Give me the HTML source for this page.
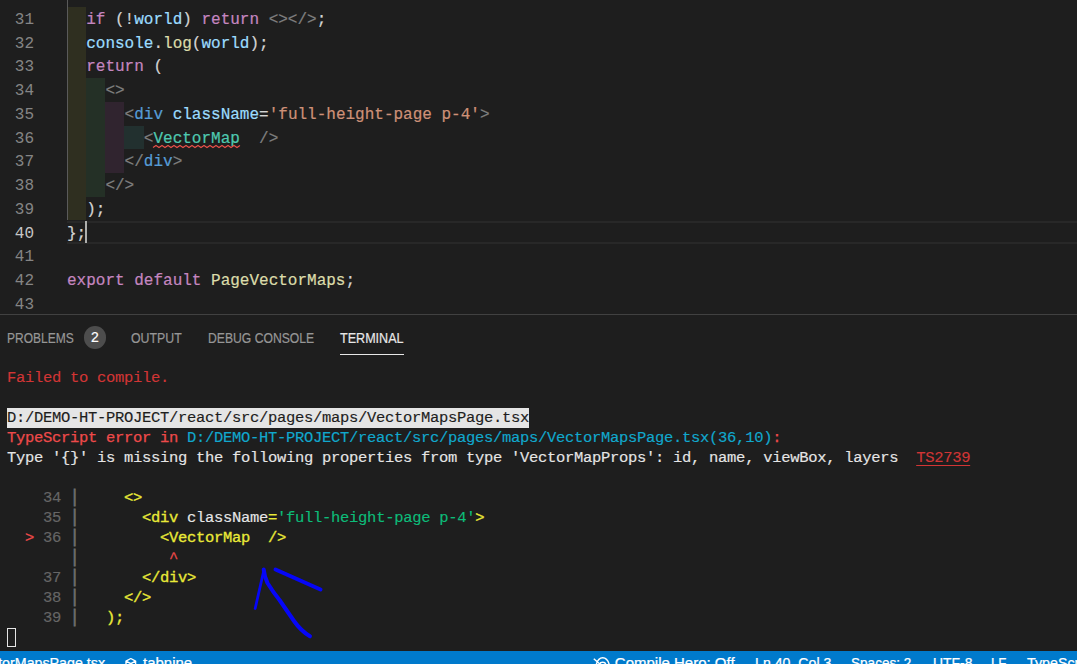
<!DOCTYPE html>
<html><head><meta charset="utf-8">
<style>
html,body{margin:0;padding:0;}
body{width:1077px;height:664px;overflow:hidden;background:#1e1e1e;position:relative;font-family:"Liberation Mono",monospace;}
#ed{position:absolute;left:0;top:6.3px;width:1077px;}
.ln{position:absolute;left:0;width:1077px;height:23.75px;line-height:23.75px;font-size:16px;color:#d4d4d4;white-space:pre;}
.num{position:absolute;left:-1px;top:2px;width:35px;text-align:right;color:#858585;font-size:16px;font-family:"Liberation Mono",monospace;}
.code{position:absolute;left:67px;top:2px;-webkit-text-stroke:0.2px;}
.k{color:#c586c0}.v{color:#9cdcfe}.f{color:#dcdcaa}.s{color:#ce9178}.t{color:#569cd6}.c{color:#4ec9b0}.p{color:#808080}
.blk{position:absolute;}
#panelborder{position:absolute;left:0;top:314px;width:1077px;height:1px;background:#414141;}
.tab{position:absolute;top:329.5px;font-family:"Liberation Sans",sans-serif;font-size:14px;line-height:16px;color:#969696;white-space:pre;transform-origin:0 0;-webkit-text-stroke:0.2px;}
#term{position:absolute;left:7px;top:368px;font-size:15.5px;letter-spacing:-0.3px;line-height:20px;white-space:pre;color:#e5e5e5;-webkit-text-stroke:0.15px;}
.tl{height:20px;}
.r{color:#d13535;-webkit-text-stroke:0.15px #d13535}.rb{color:#ee4a4a;-webkit-text-stroke:0.25px #ee4a4a}.cy{color:#11a8cd}.y{color:#eaea38;-webkit-text-stroke:0.3px #eaea38}.pp{display:inline-block;position:relative;top:-1px;transform:scaleY(1.2);color:#6e6e6e;-webkit-text-stroke:0.7px #6e6e6e}.g{color:#0dbc79}.gr{color:#666}
#status{position:absolute;left:0;top:650.5px;width:1077px;height:14px;background:#007acc;overflow:hidden;color:#fff;font-family:"Liberation Sans",sans-serif;font-size:15px;}
#status span{position:absolute;top:3.8px;-webkit-text-stroke:0.25px #fff;line-height:17px;white-space:pre;transform-origin:0 0;}
</style></head><body>
<div id="ed">
<!-- indent blocks -->
<div class="blk" style="left:67px;top:-7px;width:1px;height:221px;background:#5a5a5a"></div>
<div class="blk" style="left:68px;top:0.5px;width:17.6px;height:213.6px;background:#2f2f20"></div>
<div class="blk" style="left:85.6px;top:71.9px;width:19.7px;height:118.6px;background:#243026"></div>
<div class="blk" style="left:105.3px;top:95.7px;width:18.7px;height:70.7px;background:#30242f"></div>
<div class="blk" style="left:124px;top:119.4px;width:19.9px;height:23.3px;background:#22302f"></div>
<!-- current line -->
<div class="blk" style="left:67px;top:215px;width:1010px;height:23px;border-top:2px solid #282828;border-bottom:2px solid #282828;box-sizing:border-box"></div>
<div class="blk" style="left:85px;top:214.5px;width:2px;height:22.5px;background:#aeafad"></div>
</div>
<div id="lines">
<div class="ln" style="top:7.30px"><span class="num">31</span><span class="code">  <span class="k">if</span> (!<span class="v">world</span>) <span class="k">return</span> <span class="p">&lt;&gt;&lt;/&gt;</span>;</span></div>
<div class="ln" style="top:31.05px"><span class="num">32</span><span class="code">  <span class="v">console</span>.<span class="f">log</span>(<span class="v">world</span>);</span></div>
<div class="ln" style="top:53.80px"><span class="num">33</span><span class="code">  <span class="k">return</span> (</span></div>
<div class="ln" style="top:77.55px"><span class="num">34</span><span class="code">    <span class="p">&lt;&gt;</span></span></div>
<div class="ln" style="top:102.30px"><span class="num">35</span><span class="code">      <span class="p">&lt;</span><span class="t">div</span> <span class="v">className</span>=<span class="s">'full-height-page p-4'</span><span class="p">&gt;</span></span></div>
<div class="ln" style="top:126.05px"><span class="num">36</span><span class="code">        <span class="p">&lt;</span><span class="c sq">VectorMap</span>  <span class="p">/&gt;</span></span></div>
<div class="ln" style="top:148.80px"><span class="num">37</span><span class="code">      <span class="p">&lt;/</span><span class="t">div</span><span class="p">&gt;</span></span></div>
<div class="ln" style="top:172.55px"><span class="num">38</span><span class="code">    <span class="p">&lt;/&gt;</span></span></div>
<div class="ln" style="top:197.30px"><span class="num">39</span><span class="code">  );</span></div>
<div class="ln" style="top:221.05px"><span class="num" style="color:#c6c6c6">40</span><span class="code">};</span></div>
<div class="ln" style="top:243.80px"><span class="num">41</span><span class="code"></span></div>
<div class="ln" style="top:267.55px"><span class="num">42</span><span class="code"><span class="k">export</span> <span class="k">default</span> <span class="f">PageVectorMaps</span>;</span></div>
<div class="ln" style="top:292.30px"><span class="num">43</span><span class="code"></span></div>
</div>
<svg style="position:absolute;left:0;top:0" width="1077" height="320" viewBox="0 0 1077 320"><path d="M153 147.5 L156 145.5 L159 147.5 L162 145.5 L165 147.5 L168 145.5 L171 147.5 L174 145.5 L177 147.5 L180 145.5 L183 147.5 L186 145.5 L189 147.5 L192 145.5 L195 147.5 L198 145.5 L201 147.5 L204 145.5 L207 147.5 L210 145.5 L213 147.5 L216 145.5 L219 147.5 L222 145.5 L225 147.5 L228 145.5 L231 147.5 L234 145.5 L237 147.5 L240 145.5" fill="none" stroke="#e8514a" stroke-width="1.1"/></svg>
<div id="panelborder"></div>
<div class="tab" style="left:6.6px;transform:scaleX(0.857)">PROBLEMS</div>
<div class="tab" style="left:131.2px;transform:scaleX(0.881)">OUTPUT</div>
<div class="tab" style="left:207.6px;transform:scaleX(0.869)">DEBUG CONSOLE</div>
<div class="tab" style="left:340px;color:#e7e7e7;transform:scaleX(0.898)">TERMINAL</div>
<div style="position:absolute;left:340px;top:353.5px;width:64px;height:1.25px;background:#e7e7e7"></div>
<div style="position:absolute;left:83.8px;top:326.4px;width:22px;height:22.4px;border-radius:11.2px;background:#4d4d4d;color:#fff;font-family:'Liberation Sans',sans-serif;font-size:14px;line-height:22px;-webkit-text-stroke:0.2px;text-align:center">2</div>
<div id="term"><div class="tl r">Failed to compile.</div><div class="tl"> </div><div class="tl"><span style="background:#e5e5e5;color:#1e1e1e;display:inline-block;height:20px;vertical-align:top">D:/DEMO-HT-PROJECT/react/src/pages/maps/VectorMapsPage.tsx</span></div><div class="tl"><span class="rb">TypeScript error in </span><span class="cy">D:/DEMO-HT-PROJECT/react/src/pages/maps/VectorMapsPage.tsx(36,10)</span><span class="rb">:</span></div><div class="tl">Type '{}' is missing the following properties from type 'VectorMapProps': id, name, viewBox, layers  <span class="r" style="text-decoration:underline;text-underline-offset:3px;text-decoration-thickness:1.25px">TS2739</span></div><div class="tl"> </div><div class="tl"><span class="gr">    34 <span class="pp">|</span> </span>    <span class="y">&lt;&gt;</span></div><div class="tl"><span class="gr">    35 <span class="pp">|</span> </span>      <span class="y">&lt;div</span> className<span class="y">=</span><span class="g">'full-height-page p-4'</span><span class="y">&gt;</span></div><div class="tl"><span class="rb">  &gt;</span><span class="gr"> 36 <span class="pp">|</span> </span>        <span class="y">&lt;VectorMap  /&gt;</span></div><div class="tl"><span class="gr">       <span class="pp">|</span> </span>         <span class="rb">^</span></div><div class="tl"><span class="gr">    37 <span class="pp">|</span> </span>      <span class="y">&lt;/div&gt;</span></div><div class="tl"><span class="gr">    38 <span class="pp">|</span> </span>    <span class="y">&lt;/&gt;</span></div><div class="tl"><span class="gr">    39 <span class="pp">|</span> </span>  <span class="y">);</span></div></div>
<div style="position:absolute;left:7px;top:628.4px;width:9px;height:18.5px;border:1px solid #e5e5e5;box-sizing:border-box"></div>
<svg style="position:absolute;left:0;top:0" width="1077" height="664" viewBox="0 0 1077 664"><g fill="none" stroke="#0606f8" stroke-linecap="round" stroke-linejoin="round"><path d="M263.7 571 L255.2 608.5" stroke-width="2.8"/><path d="M263.7 569.5 Q264.5 577 267.5 583 Q273 592 279.5 600 L294 621 Q301 631 310 636.3" stroke-width="4"/><path d="M275.5 569.5 L320.5 589.5" stroke-width="4"/></g></svg>
<div id="status"><span id="s1" style="left:-8.9px;transform:scaleX(0.95)">ctorMapsPage.tsx</span><span id="s2" style="left:143.0px;transform:scaleX(1.0)">tabnine</span><span id="s3" style="left:614.8px;transform:scaleX(1.0)">Compile Hero: Off</span><span id="s4" style="left:754.6px;transform:scaleX(0.944)">Ln 40, Col 3</span><span id="s5" style="left:851.4px;transform:scaleX(0.904)">Spaces: 2</span><span id="s6" style="left:932.6px;transform:scaleX(0.927)">UTF-8</span><span id="s7" style="left:991.2px;transform:scaleX(0.88)">LF</span><span id="s8" style="left:1027.0px;transform:scaleX(0.95)">TypeScript</span></div>
<svg style="position:absolute;left:0;top:650.5px" width="1077" height="14" viewBox="0 650.5 1077 14"><g fill="none" stroke="#fff" stroke-width="1.4" stroke-linejoin="round"><path d="M130.8 658 L135.6 660.6 L135.6 666 M130.8 658 L126 660.6 L126 666 M126 660.6 L130.8 663.2 L135.6 660.6 M130.8 663.2 V668"/><path d="M595.8 666 C597 660 600 657.3 602.7 657.3 C605.5 657.3 608.5 660 609.7 666"/><circle cx="602.7" cy="665" r="3.2"/><path d="M593.8 658.2 L606 669"/></g></svg>
</body></html>
